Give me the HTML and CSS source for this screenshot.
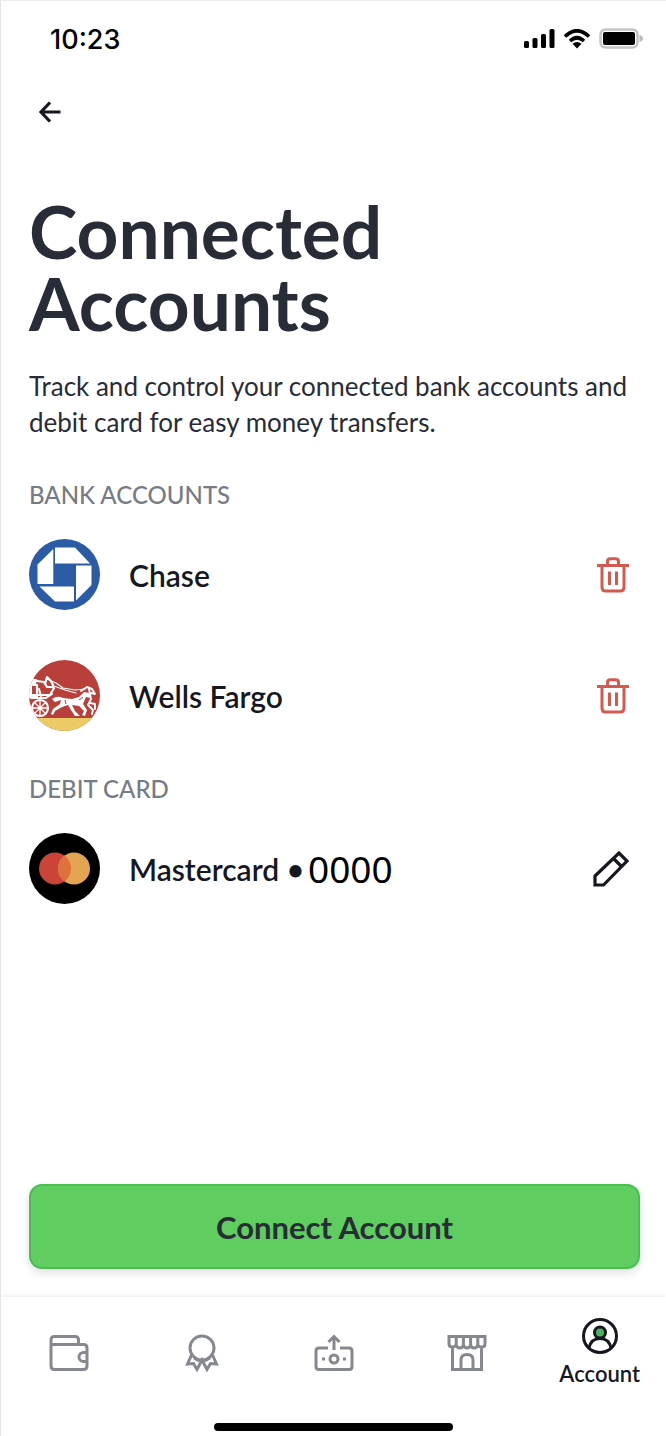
FILE: index.html
```html
<!DOCTYPE html>
<html lang="en">
<head>
  <meta charset="UTF-8" />
  <meta name="viewport" content="width=device-width, initial-scale=1" />
  <title>Connected Accounts</title>
  <link rel="stylesheet" href="styles.css">
</head>
<body>

  <!-- Status bar -->
  <header class="status-bar">
    <span class="clock">10:23</span>
    <div class="status-icons">
      <svg width="31" height="20" viewBox="0 0 31 20" aria-hidden="true">
        <rect x="0" y="12" width="5" height="7" rx="1.5"/>
        <rect x="8.500" y="9" width="5" height="10" rx="1.5"/>
        <rect x="17" y="5" width="5" height="14" rx="1.5"/>
        <rect x="25.500" y="0" width="5" height="19" rx="1.5"/>
      </svg>
      <svg width="28" height="20" viewBox="0 0 28 20" aria-hidden="true">
        <path d="M2 7.500Q14 -4 26 7.500M7 12Q14 5.500 21 12" fill="none" stroke="#000" stroke-width="3.600"/>
        <path d="M9.500 14.800Q14 11.200 18.500 14.800L14 19.500Z"/>
      </svg>
      <svg width="45" height="22" viewBox="0 0 45 22" aria-hidden="true">
        <rect x="1.500" y="1.500" width="37" height="18" rx="5" fill="#fff" stroke="#c4c4c4" stroke-width="2.500"/>
        <rect x="4" y="4" width="32" height="13" rx="2"/>
        <path d="M40.500 7Q44 8 44 10.500T40.500 14Z" fill="#bbb"/>
      </svg>
    </div>
  </header>

  <main>
    <button class="icon-btn back" aria-label="Back">
      <svg width="24" height="24" viewBox="0 0 24 24" aria-hidden="true">
        <path d="M12 2.500L3 12L12 21.500M3 12H22.500" fill="none" stroke="#16181f" stroke-width="3.200"/>
      </svg>
    </button>

    <h1>Connected Accounts</h1>
    <p class="intro">Track and control your connected bank accounts and debit card for easy money transfers.</p>

    <section>
      <h2>BANK ACCOUNTS</h2>
      <ul class="accounts">
        <li class="account">
          <svg class="logo" viewBox="0 0 71 71" aria-hidden="true">
            <circle cx="35.500" cy="35.500" r="35.500" fill="#2b5ba5"/>
            <g fill="#fff">
              <path d="M26 8.500H46L61 24.500H26Z"/>
              <path d="M47 26.500H62.500V46L47 61.500Z"/>
              <path d="M10.500 47.500H45V62.500H26Z"/>
              <path d="M24.300 10V45H8.500V25.500Z"/>
            </g>
          </svg>
          <span class="name">Chase</span>
          <button class="icon-btn" aria-label="Remove Chase">
            <svg width="32" height="36" viewBox="0 0 32 36" fill="none" stroke="#d25a50" stroke-width="3" aria-hidden="true">
              <path d="M0 8.500H32M10.500 8V4.500Q10.500 1.800 13.500 1.800H18.500Q21.500 1.800 21.500 4.500V8M5 9V30Q5 34 8.500 34H23.500Q27 34 27 30V9M12.500 14.500V28M19.500 14.500V28"/>
            </svg>
          </button>
        </li>
        <li class="account">
          <svg class="logo" viewBox="0 0 71 71" aria-hidden="true">
            <clipPath id="wf"><circle cx="35.500" cy="35.500" r="35.500"/></clipPath>
            <g clip-path="url(#wf)">
              <rect width="71" height="71" fill="#b83f3a"/>
              <rect y="58" width="71" height="13" fill="#eccb67"/>
              <path d="M0 19H8L7 24H3V34H9V38H0Z" fill="#fff"/>
              <g fill="none" stroke="#fff" stroke-linecap="round" stroke-linejoin="round">
                <!-- coach and driver -->
                <path d="M4 25H8V35H21L25 28M8 21L15 22L18 27H24M16 24L18 17L22 21L24 25" stroke-width="2.200"/>
                <path d="M10 29L12 36M2 38H17L23 34" stroke-width="2"/>
                <!-- wheel -->
                <circle cx="11" cy="48" r="8" stroke-width="2.200"/>
                <path d="M3 48H19M11 40V56M5.500 42.500L16.500 53.500M16.500 42.500L5.500 53.500" stroke-width="1.300"/>
                <!-- reins -->
                <path d="M20 20L27 23L34 28L46 30L56 29M25 26L36 30L47 33" stroke-width="1.100"/>
                <!-- second horse -->
                <path d="M52 31L58 27L63 29L66 34L62 33M60 29L62 39L59 45L64 50L63 54M61 43L66 44V49" stroke-width="1.900"/>
              </g>
              <!-- lead horse -->
              <path d="M23 39Q29 35 34 38L43 39L50 37L55 32L60 33L62 38L57 37L54 44L58 50L56 56L53 55L55 51L50 46L43 45L46 51L51 56H46L42 50L39 45L33 47L26 51L24 55L22 54L24 49L31 44L32 40L26 42Z" fill="#fff"/>
              <path d="M36 40L37 44M50 40L54 37" fill="none" stroke="#b83f3a" stroke-width="1"/>
            </g>
          </svg>
          <span class="name">Wells Fargo</span>
          <button class="icon-btn" aria-label="Remove Wells Fargo">
            <svg width="32" height="36" viewBox="0 0 32 36" fill="none" stroke="#d25a50" stroke-width="3" aria-hidden="true">
              <path d="M0 8.500H32M10.500 8V4.500Q10.500 1.800 13.500 1.800H18.500Q21.500 1.800 21.500 4.500V8M5 9V30Q5 34 8.500 34H23.500Q27 34 27 30V9M12.500 14.500V28M19.500 14.500V28"/>
            </svg>
          </button>
        </li>
      </ul>
    </section>

    <section>
      <h2>DEBIT CARD</h2>
      <ul class="accounts">
        <li class="account">
          <svg class="logo" viewBox="0 0 71 71" aria-hidden="true">
            <circle cx="35.500" cy="35.500" r="35.500"/>
            <circle cx="26" cy="35.500" r="16" fill="#cc4338"/>
            <circle cx="45" cy="35.500" r="16" fill="#e3a552"/>
            <path d="M35.500 22.600A16 16 0 0 1 35.500 48.400A16 16 0 0 1 35.500 22.600Z" fill="#dd703c"/>
          </svg>
          <span class="name">Mastercard • <span class="digits">0000</span></span>
          <button class="icon-btn" aria-label="Edit debit card">
            <svg width="36" height="36" viewBox="0 0 36 36" fill="none" stroke="#16181f" stroke-width="3.200" aria-hidden="true">
              <path d="M2 25L26 2L34 10L10.500 34H2ZM20.500 7.500L28.500 15.500"/>
            </svg>
          </button>
        </li>
      </ul>
    </section>

    <button class="connect-btn">Connect Account</button>
  </main>

  <!-- Bottom tabs -->
  <nav class="tabs">
    <a href="#" aria-label="Wallet">
      <svg width="40" height="40" viewBox="0 0 40 40" aria-hidden="true">
        <path d="M2 12V33Q2 36.500 5.500 36.500H34.500Q38 36.500 38 33V15Q38 11.500 34.500 11.500H2V7Q2 3.500 5.500 3.500H26Q29.500 3.500 29.500 7V11.500M38 19.500H34.500A4.500 4.500 0 0 0 34.500 28.500H38"/>
      </svg>
    </a>
    <a href="#" aria-label="Rewards">
      <svg width="40" height="40" viewBox="0 0 40 40" aria-hidden="true">
        <circle cx="20" cy="15" r="12"/>
        <path d="M9.500 22L5.500 31L11.500 30.500L15 36.500L20 27L25 36.500L28.500 30.500L34.500 31L30.500 22M12 25L17.500 28M28 25L22.500 28"/>
      </svg>
    </a>
    <a href="#" aria-label="Transfer">
      <svg width="40" height="40" viewBox="0 0 40 40" aria-hidden="true">
        <path d="M14 15H5Q2 15 2 18V33.500Q2 36.500 5 36.500H35Q38 36.500 38 33.500V18Q38 15 35 15H26M20 17V4M14.500 9L20 3.500L25.500 9"/>
        <circle cx="20" cy="26" r="4"/>
        <path d="M8 26H11M29 26H32"/>
      </svg>
    </a>
    <a href="#" aria-label="Store">
      <svg width="40" height="40" viewBox="0 0 40 40" aria-hidden="true">
        <path d="M2 3.500H38V11Q38 14 34.800 14T30.800 12Q30 15 27.200 15T23.600 12Q22.500 15 20 15T16.400 12Q15.500 15 12.800 15T9.200 12Q8 14 5.200 14T2 11ZM9.200 4V12M16.400 4V12M23.600 4V12M30.800 4V12M5.500 14V36.500H34.500V14M14 36V27Q14 21.500 20 21.500T26 27V36"/>
      </svg>
    </a>
    <a href="#" class="active">
      <svg width="36" height="36" viewBox="0 0 36 36" aria-hidden="true">
        <circle cx="18" cy="18" r="16.500"/>
        <path d="M7 30Q9 20.500 18 20.500T29 30"/>
        <circle cx="18" cy="14.500" r="5.500" fill="#4fb263"/>
      </svg>
      <span>Account</span>
    </a>
  </nav>
  <div class="home-indicator"></div>

</body>
</html>
```
FILE: styles.css
```css
/* Base reset and fonts */
* {
  margin: 0;
  padding: 0;
  box-sizing: border-box;
}
body {
  font-family: Lato, 'Open Sans', sans-serif;
  background: #fff;
  color: #16181f;
  min-height: 100vh;
  display: flex;
  flex-direction: column;
  border-left: 1px solid #e3e3e3;
  border-top: 1px solid #ececec;
}
button {
  font-family: inherit;
  cursor: pointer;
}
svg {
  display: block;
  flex-shrink: 0;
}

/* Status bar */
.status-bar {
  display: flex;
  justify-content: space-between;
  align-items: center;
  height: 76px;
  padding: 0 22px 0 49px;
}
.clock {
  font-family: Inter, sans-serif;
  font-size: 27px;
  font-weight: 500;
  color: #000;
}
.status-icons {
  display: flex;
  align-items: center;
  gap: 8px;
}

/* Page content */
main {
  flex-grow: 1;
  display: flex;
  flex-direction: column;
  padding: 23px 26px 28px 28px;
}
.icon-btn {
  background: none;
  border: none;
}
.back {
  align-self: flex-start;
  padding: 0 9px;
}
h1 {
  max-width: 420px;
  margin-top: 71px;
  font-size: 73px;
  line-height: 72px;
  font-weight: 700;
  color: #282c37;
}
.intro {
  margin-top: 29px;
  font-size: 26px;
  line-height: 36px;
  color: #282c37;
}
h2 {
  margin-top: 40px;
  font-size: 24px;
  line-height: 30px;
  font-weight: 500;
  color: #777b84;
}
section + section {
  margin-top: 3px;
}
.accounts {
  list-style: none;
  display: flex;
  flex-direction: column;
  gap: 50px;
  margin-top: 29px;
}
.account {
  display: flex;
  align-items: center;
  gap: 29px;
  padding-right: 11px;
}
.logo {
  width: 71px;
  height: 71px;
}
.name {
  display: flex;
  align-items: center;
  gap: 4px;
  flex-grow: 1;
  font-size: 30px;
  line-height: 36px;
  font-weight: 600;
}
.digits {
  font-family: 'Noto Sans', sans-serif;
  font-size: 37px;
  font-weight: 400;
  color: #000;
}
.connect-btn {
  margin-top: auto;
  height: 85px;
  font-size: 31px;
  font-weight: 700;
  color: #282c37;
  background: #5fcd5f;
  border: 2px solid #4abf50;
  border-radius: 13px;
  box-shadow: 0 4px 10px rgba(0, 0, 0, 0.12);
}

/* Bottom tabs */
.tabs {
  display: grid;
  grid-template-columns: repeat(5, 1fr);
  height: 126px;
  padding: 0 0 15px 2px;
  box-shadow: 0 -2px 3px rgba(0, 0, 0, 0.06);
}
.tabs a {
  display: flex;
  flex-direction: column;
  align-items: center;
  justify-content: center;
  gap: 7px;
  font-size: 22px;
  line-height: 26px;
  font-weight: 600;
  color: #16181f;
  text-decoration: none;
}
.tabs svg {
  fill: none;
  stroke: #85888f;
  stroke-width: 3;
}
.tabs .active svg {
  stroke: #16181f;
}
.home-indicator {
  width: 36%;
  height: 8px;
  margin: 0 auto 5px;
  border-radius: 4px;
  background: #000;
}
```
